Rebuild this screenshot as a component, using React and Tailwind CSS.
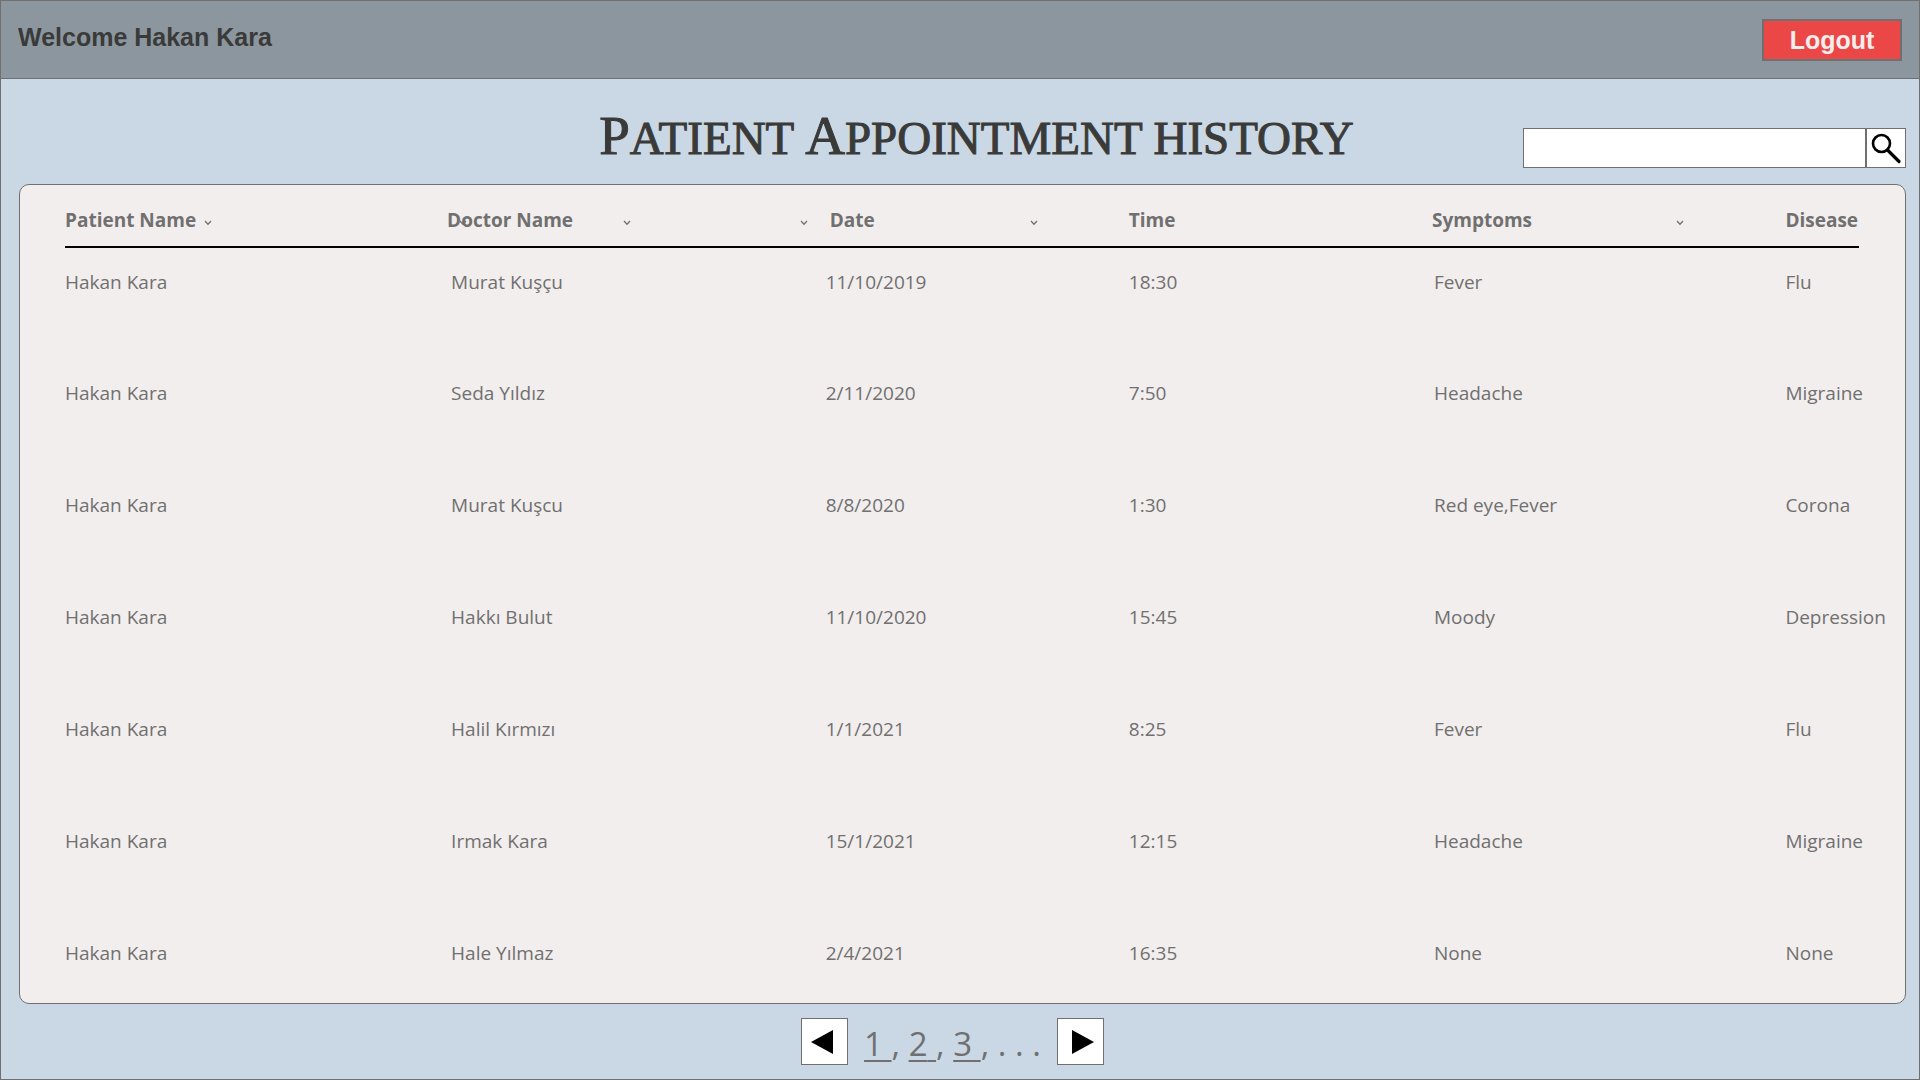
import React from "react";

const appointments = [
  ["Hakan Kara", "Murat Kuşçu", "11/10/2019", "18:30", "Fever", "Flu"],
  ["Hakan Kara", "Seda Yıldız", "2/11/2020", "7:50", "Headache", "Migraine"],
  ["Hakan Kara", "Murat Kuşcu", "8/8/2020", "1:30", "Red eye,Fever", "Corona"],
  ["Hakan Kara", "Hakkı Bulut", "11/10/2020", "15:45", "Moody", "Depression"],
  ["Hakan Kara", "Halil Kırmızı", "1/1/2021", "8:25", "Fever", "Flu"],
  ["Hakan Kara", "Irmak Kara", "15/1/2021", "12:15", "Headache", "Migraine"],
  ["Hakan Kara", "Hale Yılmaz", "2/4/2021", "16:35", "None", "None"],
];

const cellPadding = ["", "pl-1", "", "", "pl-0.5", ""];

function SortButton({ label, className = "" }) {
  return (
    <button type="button" aria-label={label} className={`block h-2 w-2 shrink-0 ${className}`}>
      <svg viewBox="0 0 8 8" className="block size-2" fill="none" stroke="#707070" strokeWidth="1.3">
        <path d="M1 3 L4 6.2 L7 3" />
      </svg>
    </button>
  );
}

function HeaderCell({ children, className = "" }) {
  return (
    <th scope="col" className={`px-0 pb-0 pt-2 text-left font-bold ${className}`}>
      <div className="flex items-center whitespace-nowrap">{children}</div>
    </th>
  );
}

function PageLink({ page }) {
  return (
    <>
      <a href={`#page-${page}`} className="underline decoration-2 underline-offset-4">{page}&nbsp;</a>
      {", "}
    </>
  );
}

function TopBar() {
  return (
    <header className="flex h-[78px] items-start justify-between border-b border-[#707070] bg-[#8c969f] pl-[17px] pr-[17px] pt-[18px] font-['Liberation_Sans',sans-serif] text-[25px] font-bold">
      <p className="leading-9 text-[#3a3a39]">Welcome Hakan Kara</p>
      <button type="button" className="flex h-[42px] w-[140px] items-center justify-center border-2 border-[#707070] bg-[#eb4747] leading-none text-[#f2eeed]">
        Logout
      </button>
    </header>
  );
}

function Search() {
  return (
    <form role="search" className="flex h-10 w-full max-w-[383px] self-end justify-self-end" onSubmit={(e) => e.preventDefault()}>
      <input type="search" aria-label="Search appointments" className="min-w-0 flex-1 border border-[#707070] bg-white px-2 text-xl outline-none" />
      <button type="submit" aria-label="Search" className="flex w-10 items-center justify-center border border-[#707070] bg-white">
        <svg viewBox="0 0 38 38" className="size-[38px]" fill="none" stroke="#000" strokeLinecap="round">
          <circle cx="14.5" cy="14.5" r="8.5" strokeWidth="2.6" />
          <path d="M20.5 21 L32 32.5" strokeWidth="3.2" />
        </svg>
      </button>
    </form>
  );
}

export default function App() {
  return (
    <div className="flex min-h-screen flex-col overflow-hidden border border-[#707070] bg-[#cad8e5] font-['Open_Sans','Noto_Sans',sans-serif] text-[#707070]">
      <TopBar />
      <main className="flex flex-1 flex-col pl-[18px] pr-[13px]">
        <div className="grid h-[89px] grid-cols-[1fr_auto_1fr] pl-7">
          <span />
          <h1 className="self-end whitespace-nowrap font-['Liberation_Serif',serif] text-[47px] uppercase leading-[60px] text-[#3a3a39] [-webkit-text-stroke:1px_#3a3a39]">
            <span className="text-[55px]">P</span>atient <span className="text-[55px]">A</span>ppointment history
          </h1>
          <Search />
        </div>

        <section className="mt-4 rounded-[10px] border border-[#707070] bg-[#f2eeed] pl-[45px] pr-[46px]">
          <table className="w-full table-fixed border-collapse text-[19px] leading-7">
            <colgroup>
              <col className="w-[21.3%]" />
              <col className="w-[21.1%]" />
              <col className="w-[16.9%]" />
              <col className="w-[16.9%]" />
              <col className="w-[19.7%]" />
              <col className="w-[4.1%]" />
            </colgroup>
            <thead>
              <tr className="h-[62px] border-b-2 border-black">
                <HeaderCell>
                  Patient Name
                  <SortButton label="Sort by patient name" className="ml-2 mt-1" />
                </HeaderCell>
                <HeaderCell>
                  <span className="relative">
                    Doctor Name
                    <SortButton label="Sort by doctor name" className="absolute left-3 top-3" />
                  </span>
                  <SortButton label="Sort doctors ascending" className="ml-[50px] mt-1" />
                  <SortButton label="Sort doctors descending" className="ml-[169px] mt-1" />
                </HeaderCell>
                <HeaderCell className="pl-1">
                  <span className="w-[200px]">Date</span>
                  <SortButton label="Sort by date" className="mt-1" />
                </HeaderCell>
                <HeaderCell>Time</HeaderCell>
                <HeaderCell>
                  <span className="w-[244px]">Symptoms</span>
                  <SortButton label="Sort by symptoms" className="mt-1" />
                </HeaderCell>
                <HeaderCell>Disease</HeaderCell>
              </tr>
            </thead>
            <tbody>
              {appointments.map((row, r) => (
                <tr key={r} className="h-28 last:h-[84px]">
                  {row.map((value, c) => (
                    <td key={c} className={`whitespace-nowrap px-0 pb-0 pt-5 align-top ${cellPadding[c]}`}>{value}</td>
                  ))}
                </tr>
              ))}
            </tbody>
          </table>
        </section>

        <nav aria-label="Pagination" className="flex flex-1 items-center justify-center pr-5">
          <button type="button" aria-label="Previous page" className="flex size-[47px] items-center justify-center border border-[#707070] bg-white">
            <svg viewBox="0 0 45 45" className="size-[45px]"><path d="M9 23 L31 11 V35 Z" /></svg>
          </button>
          <p className="mx-4 whitespace-pre pt-1 text-[33px] leading-[46px]">
            <PageLink page="1" />
            <PageLink page="2" />
            <PageLink page="3" />
            . . .
          </p>
          <button type="button" aria-label="Next page" className="flex size-[47px] items-center justify-center border border-[#707070] bg-white">
            <svg viewBox="0 0 45 45" className="size-[45px]"><path d="M36 23 L14 11 V35 Z" /></svg>
          </button>
        </nav>
      </main>
    </div>
  );
}
